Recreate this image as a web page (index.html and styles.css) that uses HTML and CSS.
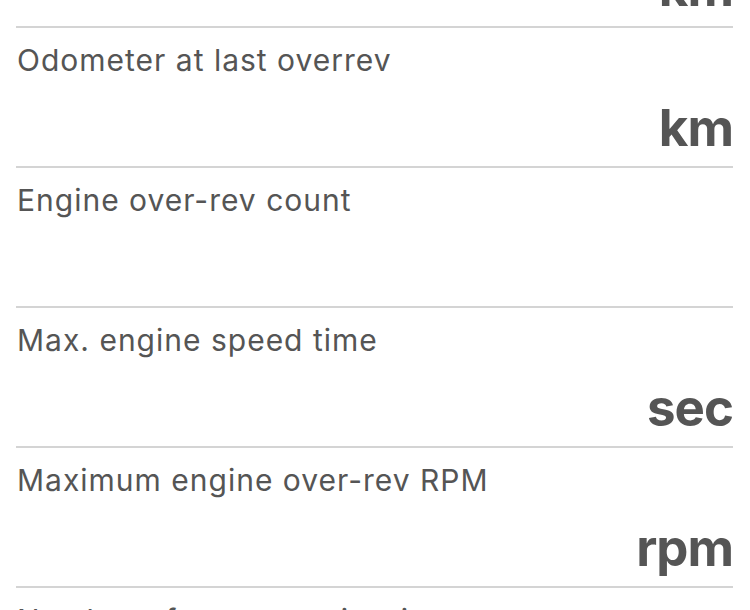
FILE: index.html
```html
<!DOCTYPE html>
<html lang="en">
<head>
<meta charset="utf-8">
<title>Over-rev details</title>
<link rel="stylesheet" href="styles.css">
</head>
<body>
<div class="list">
  <div class="row">
    <div class="label">Odometer at first overrev</div>
    <div class="value">km</div>
  </div>
  <div class="row">
    <div class="label">Odometer at last overrev</div>
    <div class="value">km</div>
  </div>
  <div class="row">
    <div class="label">Engine over-rev count</div>
    <div class="value"></div>
  </div>
  <div class="row">
    <div class="label">Max. engine speed time</div>
    <div class="value">sec</div>
  </div>
  <div class="row">
    <div class="label">Maximum engine over-rev RPM</div>
    <div class="value">rpm</div>
  </div>
  <div class="row">
    <div class="label">Number of over-revs in trip</div>
    <div class="value"></div>
  </div>
</div>
</body>
</html>
```

FILE: styles.css
```css
html, body {
  margin: 0;
  padding: 0;
  background: #ffffff;
}
body {
  width: 750px;
  height: 610px;
  overflow: hidden;
  font-family: Inter, "Liberation Sans", sans-serif;
  color: #555555;
}
.list {
  margin: -112px 17px 0 16px;
}
.row {
  display: flex;
  flex-direction: column;
  padding: 14px 0 8px 0;
  border-bottom: 2px solid #d4d4d4;
}
.label {
  font-size: 30px;
  line-height: 36px;
  height: 36px;
  padding-left: 1px;
  letter-spacing: 1px;
  white-space: nowrap;
}
.value {
  margin-top: 20px;
  height: 60px;
  font-size: 51px;
  line-height: 60px;
  font-weight: 700;
  letter-spacing: -1px;
  text-align: right;
  color: #555555;
}
```
